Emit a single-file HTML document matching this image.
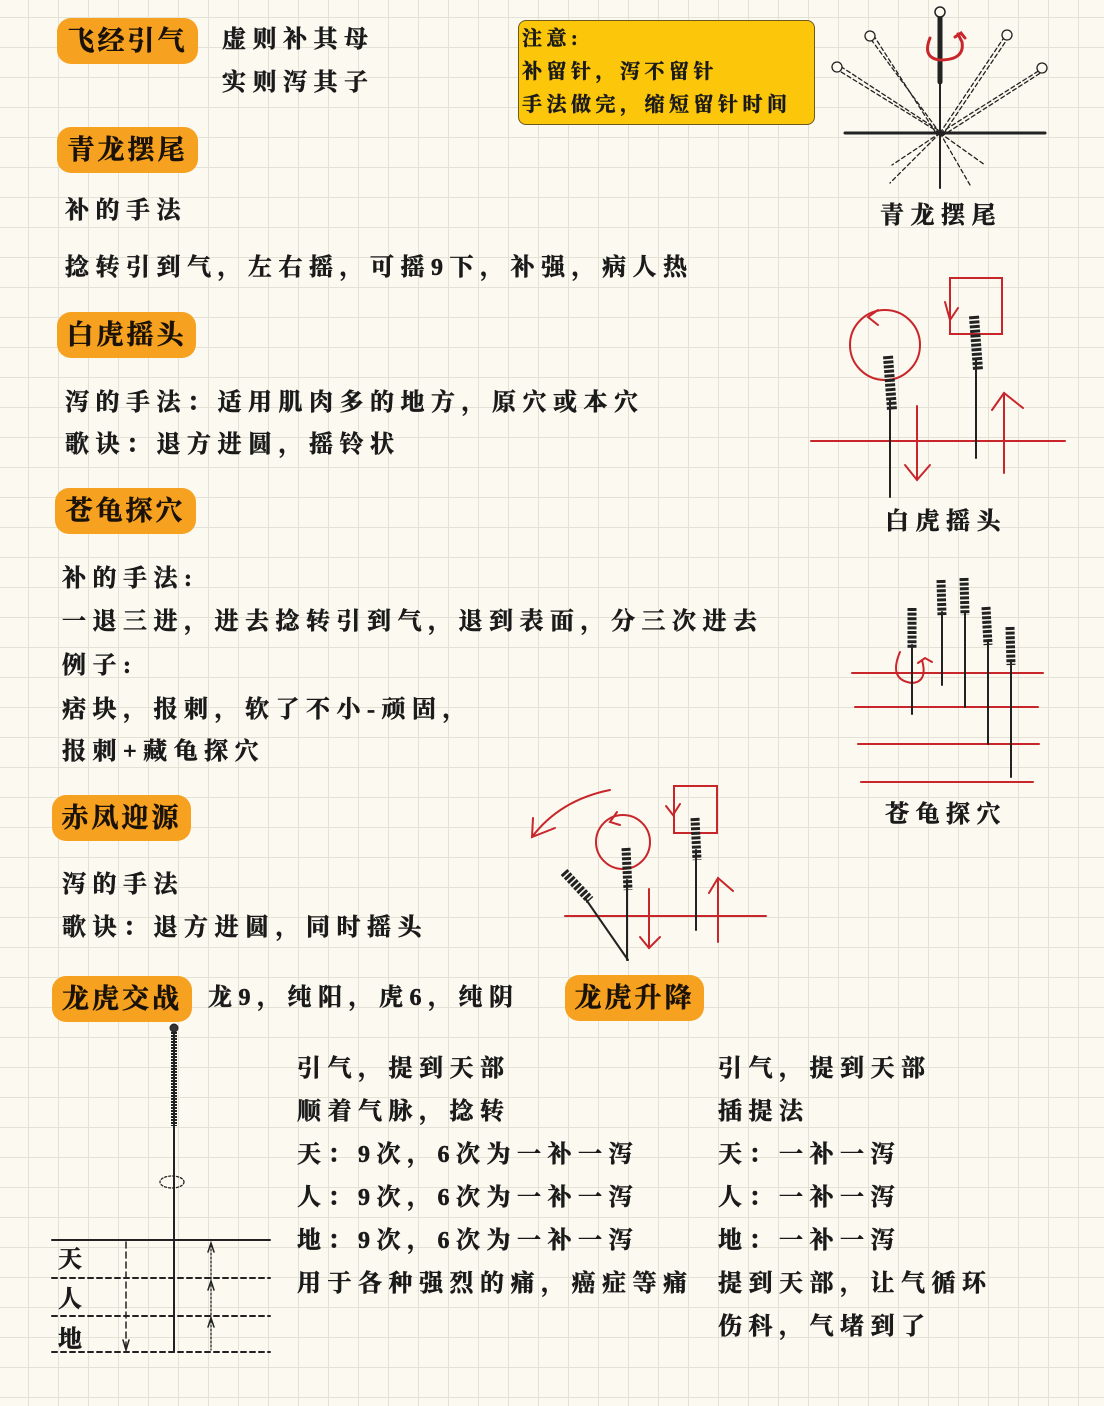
<!DOCTYPE html>
<html><head><meta charset="utf-8"><style>
*{margin:0;padding:0;box-sizing:border-box}
body{width:1104px;height:1406px;position:relative;overflow:hidden;background-color:#fbf9f0;
background-image:linear-gradient(to right,#e4e1d6 1px,transparent 1px),linear-gradient(to bottom,#e4e1d6 1px,transparent 1px);
background-size:30px 30px;background-position:-2px 17px;
font-family:"Liberation Serif","Noto Serif CJK SC",serif;color:#1a1a1a}
.t{position:absolute;font-size:24px;letter-spacing:6.5px;font-weight:700;white-space:nowrap;line-height:30px;-webkit-text-stroke:0.5px #1a1a1a}
.tag{position:absolute;background:#f6a11f;border-radius:14px;font-size:27px;font-weight:700;letter-spacing:3px;text-align:center;line-height:46px;height:46px;width:141px;color:#1a1208;-webkit-text-stroke:0.5px #1a1208}
.box{position:absolute;left:518px;top:20px;width:297px;height:105px;background:#fcc60a;border:1.5px solid #6b5a1e;border-radius:8px;padding:2px 3px}
.box div{font-size:20px;font-weight:700;letter-spacing:4.5px;line-height:33px;white-space:nowrap;-webkit-text-stroke:0.5px #1a1a1a}
svg{position:absolute;left:0;top:0}
.z{stroke-linecap:butt}
</style></head><body>
<div class="tag" style="left:57px;top:18px">飞经引气</div>
<div class="t" style="left:222px;top:25px">虚则补其母</div>
<div class="t" style="left:222px;top:68px">实则泻其子</div>
<div class="box"><div>注意:</div><div>补留针，泻不留针</div><div>手法做完，缩短留针时间</div></div>
<div class="tag" style="left:57px;top:127px">青龙摆尾</div>
<div class="t" style="left:65px;top:196px">补的手法</div>
<div class="t" style="left:65px;top:253px">捻转引到气，左右摇，可摇9下，补强，病人热</div>
<div class="t" style="left:880px;top:201px">青龙摆尾</div>
<div class="tag" style="left:57px;top:312px;width:139px">白虎摇头</div>
<div class="t" style="left:65px;top:388px">泻的手法：适用肌肉多的地方，原穴或本穴</div>
<div class="t" style="left:65px;top:430px">歌诀：退方进圆，摇铃状</div>
<div class="t" style="left:885px;top:507px">白虎摇头</div>
<div class="tag" style="left:55px;top:488px">苍龟探穴</div>
<div class="t" style="left:62px;top:564px">补的手法:</div>
<div class="t" style="left:62px;top:607px">一退三进，进去捻转引到气，退到表面，分三次进去</div>
<div class="t" style="left:62px;top:651px">例子:</div>
<div class="t" style="left:62px;top:695px">痞块，报刺，软了不小-顽固，</div>
<div class="t" style="left:62px;top:737px">报刺+藏龟探穴</div>
<div class="t" style="left:885px;top:800px">苍龟探穴</div>
<div class="tag" style="left:52px;top:795px;width:139px">赤凤迎源</div>
<div class="t" style="left:62px;top:870px">泻的手法</div>
<div class="t" style="left:62px;top:913px">歌诀：退方进圆，同时摇头</div>
<div class="tag" style="left:52px;top:976px;width:140px">龙虎交战</div>
<div class="t" style="left:208px;top:983px">龙9，纯阳，虎6，纯阴</div>
<div class="tag" style="left:565px;top:975px;width:139px">龙虎升降</div>
<div class="t" style="left:297px;top:1054px">引气，提到天部</div>
<div class="t" style="left:297px;top:1097px">顺着气脉，捻转</div>
<div class="t" style="left:297px;top:1140px">天：9次，6次为一补一泻</div>
<div class="t" style="left:297px;top:1183px">人：9次，6次为一补一泻</div>
<div class="t" style="left:297px;top:1226px">地：9次，6次为一补一泻</div>
<div class="t" style="left:297px;top:1269px">用于各种强烈的痛，癌症等痛</div>
<div class="t" style="left:718px;top:1054px">引气，提到天部</div>
<div class="t" style="left:718px;top:1097px">插提法</div>
<div class="t" style="left:718px;top:1140px">天：一补一泻</div>
<div class="t" style="left:718px;top:1183px">人：一补一泻</div>
<div class="t" style="left:718px;top:1226px">地：一补一泻</div>
<div class="t" style="left:718px;top:1269px">提到天部，让气循环</div>
<div class="t" style="left:718px;top:1312px">伤科，气堵到了</div>
<div class="t" style="left:58px;top:1245px">天</div>
<div class="t" style="left:58px;top:1285px">人</div>
<div class="t" style="left:58px;top:1325px">地</div>
<svg width="1104" height="1406" fill="none" stroke-linecap="round">
<g stroke="#222">
<line x1="845" y1="133" x2="1045" y2="133" stroke-width="3"/>
<line x1="940" y1="16" x2="940" y2="188" stroke-width="2"/>
<line x1="940" y1="18" x2="940" y2="82" stroke-width="5"/>
<circle cx="940" cy="12" r="5" stroke-width="1.5" fill="#fbf9f0"/>
<g stroke-width="1.3" stroke-dasharray="4 3">
<line x1="940" y1="133" x2="870" y2="38"/><line x1="936" y1="133" x2="874" y2="36"/>
<line x1="940" y1="133" x2="838" y2="70"/><line x1="938" y1="130" x2="840" y2="66"/>
<line x1="940" y1="133" x2="1005" y2="36"/><line x1="944" y1="133" x2="1008" y2="38"/>
<line x1="940" y1="133" x2="1040" y2="70"/><line x1="942" y1="136" x2="1042" y2="72"/>
<line x1="940" y1="133" x2="890" y2="183"/><line x1="940" y1="133" x2="892" y2="165"/>
<line x1="940" y1="133" x2="970" y2="185"/><line x1="940" y1="133" x2="985" y2="165"/>
</g>
<g stroke-width="1.3" fill="#fbf9f0"><circle cx="870" cy="36" r="5"/><circle cx="837" cy="67" r="5"/><circle cx="1007" cy="35" r="5"/><circle cx="1042" cy="68" r="5"/></g>
</g>
<path d="M930 38 Q922 58 940 60 Q965 60 962 42 L958 34 M955 37 L961 33 L965 38" stroke="#c8262b" stroke-width="3"/>
<g stroke="#c8262b" stroke-width="2">
<line x1="811" y1="441" x2="1065" y2="441"/>
<circle cx="885" cy="345" r="35"/>
<path d="M878 310 L868 317 L878 325"/>
<rect x="950" y="278" width="52" height="56"/>
<path d="M945 302 L950 320 L958 308"/>
<line x1="917" y1="406" x2="917" y2="480"/><path d="M905 465 L917 480 L930 465"/>
<line x1="1004" y1="393" x2="1004" y2="473"/><path d="M992 410 L1004 393 L1023 408"/>
</g>
<g stroke="#222">
<line x1="890" y1="400" x2="890" y2="497" stroke-width="2"/>
<line class="z" x1="888" y1="356" x2="892" y2="410" stroke-width="10" stroke-dasharray="3 1.6"/>
<line x1="976" y1="360" x2="976" y2="458" stroke-width="2"/>
<line class="z" x1="974" y1="316" x2="978" y2="370" stroke-width="10" stroke-dasharray="3 1.6"/>
</g>
<g stroke="#c8262b" stroke-width="2">
<line x1="852" y1="673" x2="1043" y2="673"/><line x1="855" y1="707" x2="1038" y2="707"/>
<line x1="858" y1="744" x2="1039" y2="744"/><line x1="861" y1="782" x2="1033" y2="782"/>
<path d="M900 652 Q888 680 912 683 Q928 682 922 660 M918 663 L925 658 L932 662"/>
</g>
<g stroke="#222">
<line x1="912" y1="645" x2="912" y2="714" stroke-width="2"/><line class="z" x1="912" y1="608" x2="912" y2="648" stroke-width="9" stroke-dasharray="3 1.6"/>
<line x1="942" y1="612" x2="942" y2="685" stroke-width="2"/><line class="z" x1="941" y1="580" x2="942" y2="616" stroke-width="9" stroke-dasharray="3 1.6"/>
<line x1="965" y1="612" x2="965" y2="707" stroke-width="2"/><line class="z" x1="964" y1="578" x2="965" y2="615" stroke-width="9" stroke-dasharray="3 1.6"/>
<line x1="988" y1="640" x2="988" y2="744" stroke-width="2"/><line class="z" x1="986" y1="607" x2="988" y2="645" stroke-width="9" stroke-dasharray="3 1.6"/>
<line x1="1011" y1="660" x2="1011" y2="777" stroke-width="2"/><line class="z" x1="1010" y1="627" x2="1011" y2="665" stroke-width="9" stroke-dasharray="3 1.6"/>
</g>
<g stroke="#c8262b" stroke-width="2">
<line x1="565" y1="916" x2="766" y2="916"/>
<circle cx="623" cy="842" r="27"/><path d="M617 812 L610 822 L620 825"/>
<rect x="674" y="786" width="43" height="47"/><path d="M666 806 L673 815 L680 804"/>
<path d="M610 790 Q560 800 532 837 M533 818 L532 837 L555 828"/>
<line x1="649" y1="889" x2="649" y2="948"/><path d="M640 937 L649 948 L660 937"/>
<line x1="718" y1="878" x2="718" y2="942"/><path d="M709 893 L718 878 L733 891"/>
</g>
<g stroke="#222">
<line x1="627" y1="880" x2="627" y2="960" stroke-width="2"/><line class="z" x1="626" y1="848" x2="628" y2="890" stroke-width="9" stroke-dasharray="3 1.6"/>
<line x1="696" y1="850" x2="696" y2="930" stroke-width="2"/><line class="z" x1="695" y1="818" x2="697" y2="860" stroke-width="9" stroke-dasharray="3 1.6"/>
<line x1="585" y1="898" x2="628" y2="960" stroke-width="2"/><line class="z" x1="564" y1="872" x2="590" y2="900" stroke-width="9" stroke-dasharray="3 1.6"/>
</g>
<g stroke="#222">
<line x1="174" y1="1030" x2="174" y2="1352" stroke-width="2"/>
<line class="z" x1="174" y1="1032" x2="174" y2="1126" stroke-width="6" stroke-dasharray="2 1"/>
<circle cx="174" cy="1028" r="4" fill="#333" stroke-width="1"/>
<ellipse cx="172" cy="1182" rx="12" ry="6" stroke-width="1.3" stroke-dasharray="2 2"/>
<line x1="52" y1="1240" x2="270" y2="1240" stroke-width="2"/>
<g stroke-width="2" stroke-dasharray="5 4"><line x1="52" y1="1278" x2="270" y2="1278"/><line x1="52" y1="1316" x2="270" y2="1316"/><line x1="52" y1="1352" x2="270" y2="1352"/></g>
<line x1="126" y1="1242" x2="126" y2="1348" stroke-width="1.5" stroke-dasharray="6 4"/><path d="M123 1340 L126 1350 L129 1340" stroke-width="1.5"/>
<line x1="211" y1="1245" x2="211" y2="1350" stroke-width="1.3" stroke-dasharray="2 2"/>
<path d="M208 1252 L211 1243 L214 1252 M208 1290 L211 1281 L214 1290 M208 1327 L211 1318 L214 1327" stroke-width="1.5"/>
</g>
</svg>
</body></html>
